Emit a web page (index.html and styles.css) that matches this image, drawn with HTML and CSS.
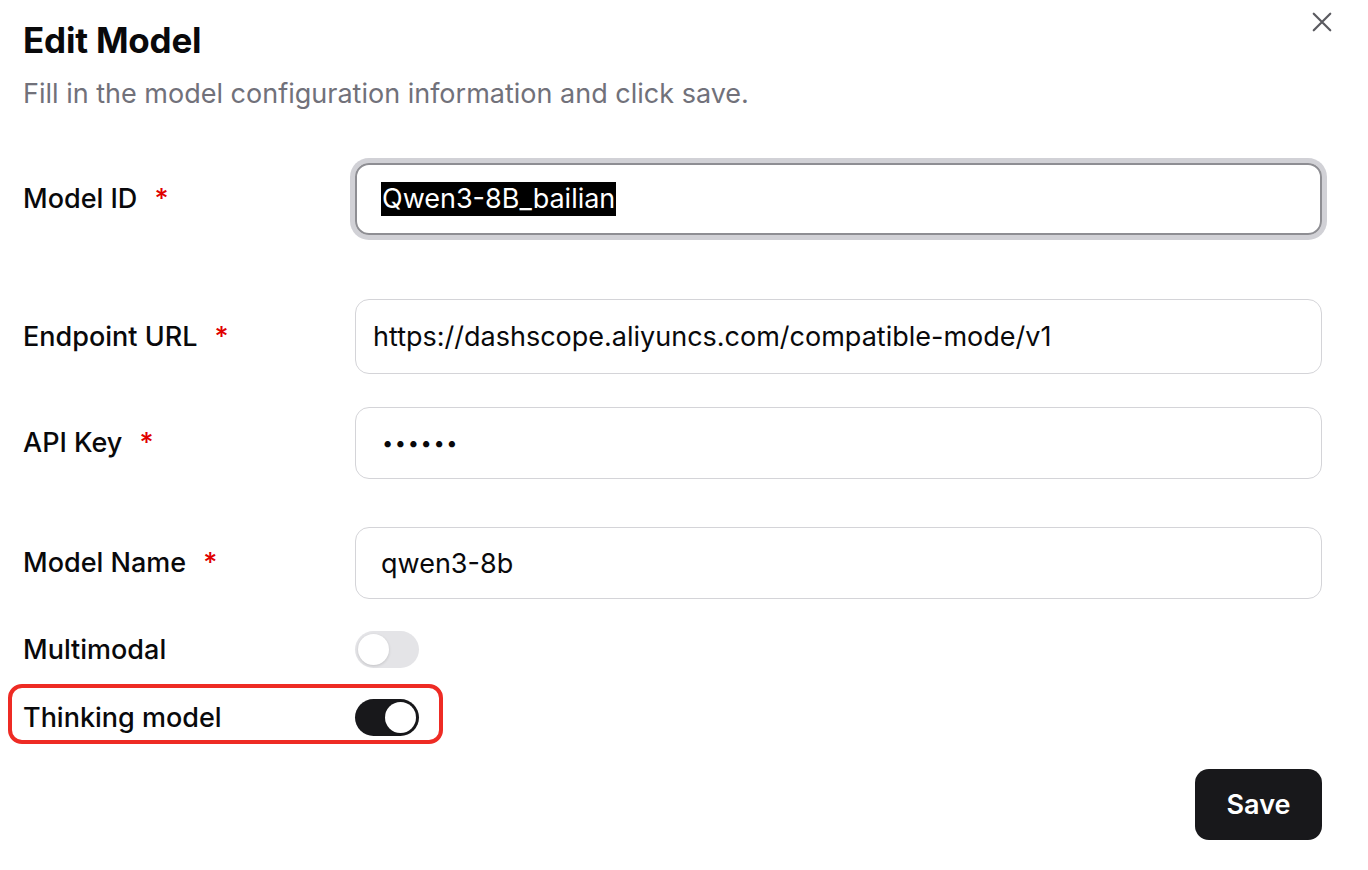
FILE: index.html
```html
<!DOCTYPE html>
<html lang="en">
<head>
<meta charset="utf-8">
<title>Edit Model</title>
<link rel="stylesheet" href="styles.css">
</head>
<body>
<div class="dialog">
  <button class="close" aria-label="Close">
    <svg viewBox="0 0 24 24" width="24" height="24" fill="none" stroke="currentColor" stroke-width="2.4" stroke-linecap="round"><path d="M3 3 L21 21 M21 3 L3 21"/></svg>
  </button>
  <header class="head">
    <h1 class="title">Edit Model</h1>
    <p class="desc">Fill in the model configuration information and click save.</p>
  </header>
  <form class="form">
    <div class="row row-id">
      <label class="label">Model ID <span class="req">*</span></label>
      <div class="input focused"><span class="sel">Qwen3-8B_bailian</span></div>
    </div>
    <div class="row row-url">
      <label class="label">Endpoint URL <span class="req">*</span></label>
      <div class="input input-tight">https://dashscope.aliyuncs.com/compatible-mode/v1</div>
    </div>
    <div class="row row-key">
      <label class="label">API Key <span class="req">*</span></label>
      <div class="input input-dots">••••••</div>
    </div>
    <div class="row row-name">
      <label class="label">Model Name <span class="req">*</span></label>
      <div class="input">qwen3-8b</div>
    </div>
    <div class="row row-switch row-multi">
      <label class="label">Multimodal</label>
      <div><span class="switch"><span class="thumb"></span></span></div>
    </div>
    <div class="row row-switch row-think">
      <span class="annot"></span>
      <label class="label">Thinking model</label>
      <div><span class="switch on"><span class="thumb"></span></span></div>
    </div>
  </form>
  <footer class="foot">
    <button class="save" type="button">Save</button>
  </footer>
</div>
</body>
</html>
```
FILE: styles.css
```css
* { box-sizing: border-box; }
html, body { margin: 0; background: #ffffff; }
body {
  font-family: Inter, "Noto Sans", "Liberation Sans", sans-serif;
  color: #09090b;
}
.dialog {
  position: relative;
  width: 1368px;
  height: 870px;
  padding: 18px 46px 0 23px;
}
.close {
  position: absolute;
  top: 10px;
  right: 34px;
  width: 24px;
  height: 24px;
  padding: 0;
  border: 0;
  background: none;
  color: #5a5a60;
}
.close svg { display: block; width: 22px; height: 22px; margin: 1px; }
.head { margin: 0; }
.title {
  margin: 0;
  font-size: 35px;
  line-height: 44px;
  font-weight: 700;
  letter-spacing: -0.2px;
}
.desc {
  margin: 14px 0 0;
  font-size: 27px;
  line-height: 36px;
  color: #71717a;
}
.form { margin-top: 51px; }
.row {
  display: grid;
  grid-template-columns: 332px 1fr;
  align-items: center;
}
.label {
  font-size: 27px;
  font-weight: 500;
  line-height: 36px;
}
.req { color: #e00000; margin-left: 10px; }
.input {
  height: 72px;
  border: 1.5px solid #d4d4d8;
  border-radius: 14px;
  padding: 0 0 0 25px;
  display: flex;
  align-items: center;
  font-size: 27px;
  color: #09090b;
  white-space: nowrap;
}
.input-tight { padding-left: 17px; height: 75px; }
.input-dots { font-size: 20px; letter-spacing: 1.6px; padding-left: 26px; }
.focused {
  border: 2.5px solid #8e8e93;
  box-shadow: 0 0 0 5px #d1d1d6;
  padding-left: 24px;
}
.sel {
  background: #000;
  color: #fff;
  line-height: 34px;
  padding: 0 1px;
}
.row-id { margin-top: 0; }
.row-url { margin-top: 64px; }
.row-key { margin-top: 33px; }
.row-name { margin-top: 48px; }
.row-multi { margin-top: 32px; }
.row-think { margin-top: 31px; position: relative; }
.switch {
  display: block;
  width: 64px;
  height: 37px;
  border-radius: 999px;
  background: #e4e4e7;
  padding: 3px;
}
.thumb {
  display: block;
  width: 31px;
  height: 31px;
  border-radius: 50%;
  background: #fff;
  box-shadow: 0 1px 3px rgba(0,0,0,0.15);
}
.switch.on { background: #18181b; }
.switch.on .thumb { margin-left: 27px; }
.annot {
  position: absolute;
  left: -15px;
  top: -15px;
  width: 435px;
  height: 60px;
  border: 4px solid #ee2b24;
  border-radius: 14px;
  pointer-events: none;
}
.foot {
  display: flex;
  justify-content: flex-end;
  margin-top: 33px;
}
.save {
  width: 127px;
  height: 71px;
  border: 0;
  border-radius: 14px;
  background: #18181b;
  color: #fff;
  font-family: inherit;
  font-size: 27px;
  font-weight: 600;
}
```
